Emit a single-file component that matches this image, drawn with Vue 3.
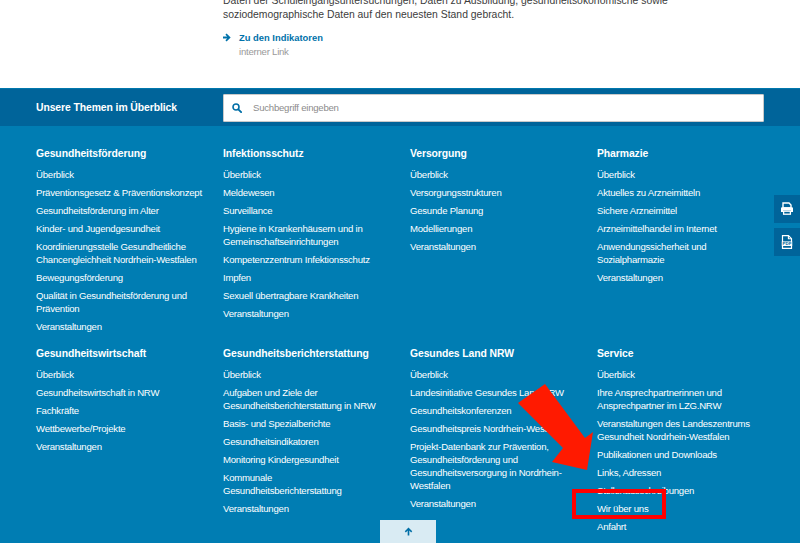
<script setup>
const groups = [
  [
    { t: 'Gesundheitsförderung', l: ['Überblick', 'Präventionsgesetz & Präventionskonzept', 'Gesundheitsförderung im Alter', 'Kinder- und Jugendgesundheit', 'Koordinierungsstelle Gesundheitliche Chancengleichheit Nordrhein-Westfalen', 'Bewegungsförderung', 'Qualität in Gesundheitsförderung und Prävention', 'Veranstaltungen'] },
    { t: 'Infektionsschutz', l: ['Überblick', 'Meldewesen', 'Surveillance', 'Hygiene in Krankenhäusern und in Gemeinschaftseinrichtungen', 'Kompetenzzentrum Infektionsschutz', 'Impfen', 'Sexuell übertragbare Krankheiten', 'Veranstaltungen'] },
    { t: 'Versorgung', l: ['Überblick', 'Versorgungsstrukturen', 'Gesunde Planung', 'Modellierungen', 'Veranstaltungen'] },
    { t: 'Pharmazie', l: ['Überblick', 'Aktuelles zu Arzneimitteln', 'Sichere Arzneimittel', 'Arzneimittelhandel im Internet', 'Anwendungssicherheit und Sozialpharmazie', 'Veranstaltungen'] },
  ],
  [
    { t: 'Gesundheitswirtschaft', l: ['Überblick', 'Gesundheitswirtschaft in NRW', 'Fachkräfte', 'Wettbewerbe/Projekte', 'Veranstaltungen'] },
    { t: 'Gesundheitsberichterstattung', l: ['Überblick', 'Aufgaben und Ziele der Gesundheitsberichterstattung in NRW', 'Basis- und Spezialberichte', 'Gesundheitsindikatoren', 'Monitoring Kindergesundheit', 'Kommunale Gesundheitsberichterstattung', 'Veranstaltungen'] },
    { t: 'Gesundes Land NRW', l: ['Überblick', 'Landesinitiative Gesundes Land NRW', 'Gesundheitskonferenzen', 'Gesundheitspreis Nordrhein-Westfalen', 'Projekt-Datenbank zur Prävention, Gesundheitsförderung und Gesundheitsversorgung in Nordrhein-Westfalen', 'Veranstaltungen'] },
    { t: 'Service', l: ['Überblick', 'Ihre Ansprechpartnerinnen und Ansprechpartner im LZG.NRW', 'Veranstaltungen des Landeszentrums Gesundheit Nordrhein-Westfalen', 'Publikationen und Downloads', 'Links, Adressen', 'Stellenausschreibungen', 'Wir über uns', 'Anfahrt'] },
  ],
]
</script>

<template>
  <div class="page">
    <section class="intro">
      <p class="copy">Daten der Schuleingangsuntersuchungen, Daten zu Ausbildung, gesundheitsökonomische sowie<br>soziodemographische Daten auf den neuesten Stand gebracht.</p>
      <a class="ilink">
        <svg class="ilink-icon" viewBox="0 0 12 12" width="9" height="9"><path d="M0 4.6h5.6L3.2 2.2 4.8.6 10.2 6l-5.4 5.4-1.6-1.6 2.4-2.4H0z" fill="#0072aa"/></svg>
        <span class="ilink-text">Zu den Indikatoren</span>
      </a>
      <div class="ilink-sub">interner Link</div>
    </section>

    <section class="bar">
      <div class="bar-title">Unsere Themen im Überblick</div>
      <div class="search">
        <svg viewBox="0 0 14 14" width="10" height="10"><circle cx="5.6" cy="5.6" r="4.2" fill="none" stroke="#006ea6" stroke-width="2.2"/><path d="M8.8 8.8l4 4" stroke="#006ea6" stroke-width="2.6" stroke-linecap="round"/></svg>
        <span class="placeholder">Suchbegriff eingeben</span>
      </div>
    </section>

    <section class="nav">
      <div v-for="(row, r) in groups" :key="r" class="row" :class="'row-' + r">
        <div v-for="g in row" :key="g.t" class="col">
          <h3 class="head">{{ g.t }}</h3>
          <a v-for="item in g.l" :key="item" class="item">{{ item }}</a>
        </div>
      </div>
    </section>

    <div class="side">
      <div class="side-btn">
        <svg viewBox="0 0 14 14" width="14" height="14"><path d="M3 1h6l2 2v3H3z" fill="none" stroke="#fff" stroke-width="1.4"/><path d="M1 6.2q0-1 1-1h10q1 0 1 1V10h-2V8.4H3V10H1z" fill="#fff"/><rect x="3.6" y="9.2" width="6.8" height="3" fill="none" stroke="#fff" stroke-width="1.3"/></svg>
      </div>
      <div class="side-btn">
        <svg viewBox="0 0 12 14" width="12" height="14"><path d="M1.5.7h6l3 3v9.6h-9z" fill="none" stroke="#fff" stroke-width="1.2"/><path d="M7.4.7v3h3" fill="none" stroke="#fff" stroke-width="1.1"/><rect x="0.8" y="6.4" width="10.4" height="4.6" fill="#fff"/><text x="6" y="10.2" text-anchor="middle" class="pdf">PDF</text></svg>
      </div>
    </div>

    <div class="top-tab">
      <svg viewBox="0 0 12 12" width="9" height="9"><path d="M6 .8L11 5.8 9.5 7.2 7.1 4.8V11.2H4.9V4.8L2.5 7.2 1 5.8z" fill="#006ea6"/></svg>
    </div>

    <svg class="arrow" viewBox="0 0 800 543" width="800" height="543"><polygon points="518,403 545,384 585,438 593,432 587,470 552,462 563,448" fill="#ff1a00"/></svg>
    <div class="mark"></div>
  </div>
</template>

<style>
html, body { margin: 0; padding: 0; background: #fff; }
</style>

<style scoped>
.page {
  position: relative;
  width: 800px;
  height: 543px;
  overflow: hidden;
  font-family: "Liberation Sans", Arial, sans-serif;
  font-size: 9.6px;
  letter-spacing: -0.24px;
  color: #fff;
  background: #007db3;
}
.intro {
  height: 88px;
  box-sizing: border-box;
  padding-left: 223px;
  background: #fff;
  color: #3c3c3c;
  overflow: hidden;
}
.copy {
  margin: -6px 0 0;
  line-height: 13.5px;
  font-size: 10.4px;
  letter-spacing: 0;
}
.ilink {
  display: flex;
  align-items: center;
  gap: 7px;
  margin-top: 9px;
  height: 14px;
}
.ilink-icon { flex: none; }
.ilink-text {
  color: #0072aa;
  font-size: 9.4px;
  font-weight: 700;
  letter-spacing: 0;
}
.ilink-sub {
  margin: 1px 0 0 16px;
  color: #9a9a9a;
  line-height: 14px;
}
.bar {
  display: flex;
  align-items: center;
  height: 38px;
  box-sizing: border-box;
  background: #00649a;
  border-top: 1px solid #0078ad;
}
.bar-title {
  width: 187px;
  margin-left: 36px;
  font-size: 10.4px;
  letter-spacing: -0.09px;
  font-weight: 700;
}
.search {
  display: flex;
  align-items: center;
  gap: 11px;
  width: 541px;
  height: 28px;
  box-sizing: border-box;
  padding-left: 8px;
  background: #fff;
  border: 1px solid #c9c9c9;
  border-radius: 1px;
}
.placeholder { color: #8c8c8c; }
.nav { padding-left: 36px; }
.row {
  display: grid;
  grid-template-columns: repeat(4, 187px);
}
.row-0 { height: 200px; padding-top: 21px; }
.col {
  display: flex;
  flex-direction: column;
  align-items: flex-start;
  width: 168px;
}
.head {
  margin: 0 0 7.5px;
  font-size: 10.4px;
  letter-spacing: -0.09px;
  line-height: 13px;
  font-weight: 700;
}
.item {
  margin-bottom: 5px;
  line-height: 13px;
}
.side {
  position: absolute;
  right: 0;
  top: 195px;
  display: flex;
  flex-direction: column;
  gap: 5px;
}
.side-btn {
  display: flex;
  align-items: center;
  justify-content: center;
  width: 26px;
  height: 28px;
  background: #00649a;
}
.pdf { font: 700 4.4px "Liberation Sans", Arial, sans-serif; fill: #00649a; letter-spacing: 0; }
.top-tab {
  position: absolute;
  left: 380px;
  bottom: 0;
  display: flex;
  align-items: center;
  justify-content: center;
  width: 56px;
  height: 23px;
  background: #d9ebf3;
}
.arrow { position: absolute; left: 0; top: 0; pointer-events: none; }
.mark {
  position: absolute;
  left: 572px;
  top: 489px;
  width: 94px;
  height: 30px;
  box-sizing: border-box;
  border: 4px solid #ff0000;
}
</style>
